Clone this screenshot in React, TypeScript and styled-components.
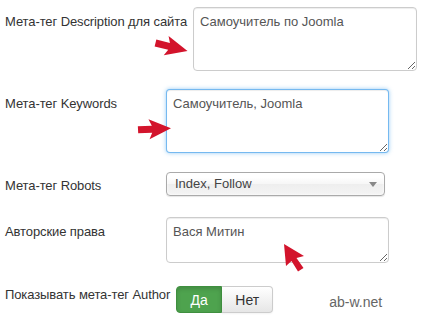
import { createGlobalStyle, styled } from "styled-components";

const Global = createGlobalStyle`
  html, body {
    margin: 0;
    background: #fff;
  }
  body {
    font-family: "Liberation Sans", Arial, sans-serif;
    font-size: 13px;
    color: #333;
  }
`;

const Form = styled.div`
  position: relative;
  width: 433px;
  height: 321px;
  box-sizing: border-box;
  padding: 7px 0 0 5px;
  overflow: hidden;
`;

const Row = styled.div<{ $space?: number }>`
  display: flex;
  flex-direction: row;
  align-items: flex-start;
  margin-top: ${(p) => p.$space ?? 0}px;
`;

const Label = styled.div<{ $top?: number }>`
  min-width: 155px;
  padding-right: 6px;
  padding-top: ${(p) => p.$top ?? 6}px;
  line-height: 18px;
  letter-spacing: -0.1px;
  white-space: nowrap;
  color: #333;
`;

const TextArea = styled.textarea<{ $w: number; $h: number; $focus?: boolean }>`
  width: ${(p) => p.$w}px;
  height: ${(p) => p.$h}px;
  box-sizing: border-box;
  margin: 0;
  padding: 4px 6px;
  font-family: "Liberation Sans", Arial, sans-serif;
  font-size: 13px;
  line-height: 20px;
  color: #555;
  background: #fff;
  border: 1px solid ${(p) => (p.$focus ? "rgba(82, 168, 236, 0.8)" : "#ccc")};
  border-radius: 4px;
  box-shadow: ${(p) =>
    p.$focus
      ? "inset 0 1px 1px rgba(0,0,0,.075), 0 0 4px rgba(82,168,236,.6)"
      : "inset 0 1px 1px rgba(0,0,0,.075)"};
  outline: none;
`;

const Select = styled.div`
  position: relative;
  width: 219px;
  height: 24px;
  box-sizing: border-box;
  padding: 0 0 0 8px;
  border: 1px solid #aaa;
  border-radius: 4px;
  background: linear-gradient(#fff 20%, #f6f6f6 50%, #eee 52%, #f4f4f4 100%);
  box-shadow: 0 0 3px #fff inset, 0 1px 1px rgba(0, 0, 0, 0.1);
  color: #444;
  line-height: 22px;
  font-size: 13px;
`;

const Caret = styled.span`
  position: absolute;
  right: 7px;
  top: 9px;
  width: 0;
  height: 0;
  border-left: 4px solid transparent;
  border-right: 4px solid transparent;
  border-top: 5px solid #888;
`;

const BtnGroup = styled.div`
  display: flex;
  flex-direction: row;
`;

const Btn = styled.div<{ $on?: boolean; $w: number }>`
  width: ${(p) => p.$w}px;
  height: 27px;
  box-sizing: border-box;
  display: flex;
  align-items: center;
  justify-content: center;
  font-size: 14px;
  border: 1px solid ${(p) => (p.$on ? "#3f8f3f" : "#ccc")};
  background: ${(p) =>
    p.$on ? "#4ea34e" : "linear-gradient(#fff, #e6e6e6)"};
  color: ${(p) => (p.$on ? "#fff" : "#333")};
  box-shadow: ${(p) =>
    p.$on ? "inset 0 2px 4px rgba(0,0,0,.15)" : "0 1px 2px rgba(0,0,0,.05)"};
  &:first-child {
    border-radius: 4px 0 0 4px;
  }
  &:last-child {
    border-radius: 0 4px 4px 0;
    border-left: none;
  }
`;

const Site = styled.div`
  margin-left: 56px;
  margin-top: 8px;
  font-size: 14px;
  color: #666;
`;

const Arrow = styled.svg<{ $x: number; $y: number; $rot: number }>`
  position: absolute;
  left: ${(p) => p.$x}px;
  top: ${(p) => p.$y}px;
  transform: rotate(${(p) => p.$rot}deg);
  transform-origin: 50% 50%;
  overflow: visible;
`;

const RedArrow = (props: { x: number; y: number; rot: number }) => (
  <Arrow $x={props.x} $y={props.y} $rot={props.rot} width="33" height="20" viewBox="0 0 33 20">
    <path d="M0 6.5 L14 6.5 L11 0 L33 10 L11 20 L14 13.5 L0 13.5 Z" fill="#d3142c" />
  </Arrow>
);

const Cursor = styled.svg`
  position: absolute;
  left: 284px;
  top: 244px;
  overflow: visible;
`;

export default function App() {
  return (
    <>
      <Global />
      <Form>
        <Row>
          <Label>Мета-тег Description для сайта</Label>
          <TextArea $w={224} $h={64} defaultValue="Самоучитель по Joomla" />
        </Row>
        <Row $space={18}>
          <Label>Мета-тег Keywords</Label>
          <TextArea $w={223} $h={64} $focus defaultValue="Самоучитель, Joomla" />
        </Row>
        <Row $space={19}>
          <Label $top={5}>Мета-тег Robots</Label>
          <Select>
            Index, Follow
            <Caret />
          </Select>
        </Row>
        <Row $space={21}>
          <Label>Авторские права</Label>
          <TextArea $w={223} $h={46} defaultValue="Вася Митин" />
        </Row>
        <Row $space={23}>
          <Label $top={0}>Показывать мета-тег Author</Label>
          <BtnGroup>
            <Btn $on $w={46}>Да</Btn>
            <Btn $w={51}>Нет</Btn>
          </BtnGroup>
          <Site>ab-w.net</Site>
        </Row>
        <RedArrow x={155} y={37} rot={14} />
        <RedArrow x={138} y={119} rot={-3} />
        <Cursor width="22" height="30" viewBox="0 0 22 30">
          <path d="M0 0 L20 12 L12.5 14 L19.5 24 L14 27.5 L7.5 17 L2 22 Z" fill="#d3142c" />
        </Cursor>
      </Form>
    </>
  );
}
